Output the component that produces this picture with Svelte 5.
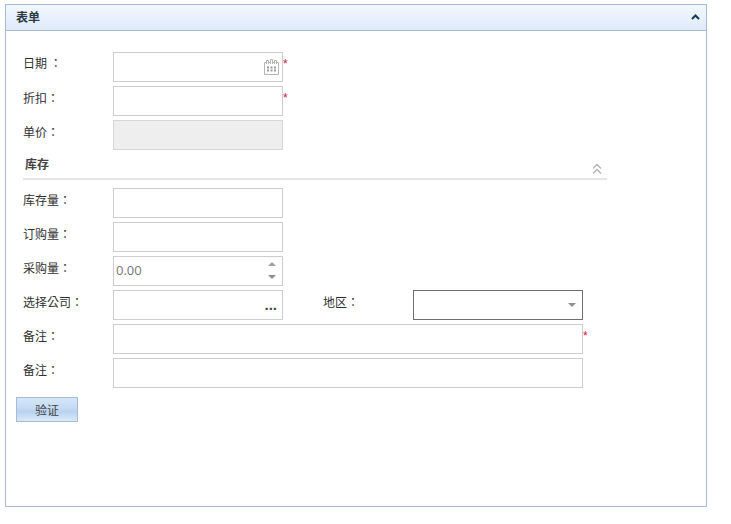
<script>
  const stock = ['库存量：', '订购量：'];
</script>

<div class="panel">
  <div class="panel-head">
    <span class="panel-title">表单</span>
    <svg class="collapse" width="9" height="6" viewBox="0 0 9 6"><path d="M1 5 L4.5 1.5 L8 5" fill="none" stroke="#1c3a4f" stroke-width="2"/></svg>
  </div>

  <div class="panel-body">
    <div class="row first">
      <span class="label">日期 ：</span>
      <div class="box">
        <svg class="calendar" width="17" height="17" viewBox="0 0 17 17" fill="none" stroke="#b4b4b4">
          <path d="M1.5 4.5 H3 M6 4.5 H7 M10 4.5 H11 M14 4.5 H15.5 V16.5 H1.5 V4.5"/>
          <path d="M3.5 6 V2.5 H5.5 V6 M7.5 6 V1.5 H9.5 V6 M11.5 6 V2.5 H13.5 V6"/>
          <path d="M4 9.5 H6 M7.5 9.5 H9.5 M11 9.5 H13 M4 12.5 H6 M7.5 12.5 H9.5 M11 12.5 H13" stroke="#9a9a9a" stroke-width="2"/>
        </svg>
      </div>
      <span class="req">*</span>
    </div>
    <div class="row">
      <span class="label">折扣：</span>
      <div class="box"></div>
      <span class="req">*</span>
    </div>
    <div class="row">
      <span class="label">单价：</span>
      <div class="box disabled"></div>
    </div>

    <div class="section">
      <span class="section-title">库存</span>
      <svg class="section-arrow" width="10" height="12" viewBox="0 0 10 12" fill="none" stroke="#b0b0b0" stroke-width="1.3">
        <path d="M1 5.5 L5 1.5 L9 5.5 M1 10.5 L5 6.5 L9 10.5"/>
      </svg>
    </div>

    {#each stock as name}
      <div class="row">
        <span class="label">{name}</span>
        <div class="box"></div>
      </div>
    {/each}

    <div class="row">
      <span class="label">采购量：</span>
      <div class="box">
        <span class="value">0.00</span>
        <span class="spin">
          <span class="tri up"></span>
          <span class="tri down"></span>
        </span>
      </div>
    </div>

    <div class="row">
      <span class="label">选择公司：</span>
      <div class="box"><span class="dots">...</span></div>
      <span class="label second">地区：</span>
      <div class="box select"><span class="tri down"></span></div>
    </div>

    <div class="row">
      <span class="label">备注：</span>
      <div class="box wide"></div>
      <span class="req">*</span>
    </div>
    <div class="row">
      <span class="label">备注：</span>
      <div class="box wide"></div>
    </div>

    <button class="verify">验证</button>
  </div>
</div>

<style>
  :global(body) {
    background: #fff;
    font-family: "Liberation Sans", "Noto Sans CJK SC", sans-serif;
    font-size: 12px;
    color: #333;
  }

  .panel {
    box-sizing: border-box;
    width: 702px;
    height: 503px;
    margin: 4px 0 0 5px;
    border: 1px solid #a3bdd8;
  }

  .panel-head {
    box-sizing: border-box;
    height: 26px;
    display: flex;
    justify-content: space-between;
    align-items: center;
    padding: 0 6px 2px 10px;
    background: linear-gradient(#f2f7fd, #dfeafa);
    border-bottom: 1px solid #a3bdd8;
  }

  .panel-title {
    font-weight: bold;
    color: #2b3a4a;
  }

  .panel-body {
    padding: 21px 0 0 17px;
  }

  .row {
    display: flex;
    height: 30px;
    margin-bottom: 4px;
  }

  .label {
    width: 90px;
    padding-top: 3px;
    line-height: 17px;
    color: #2f2f2f;
    font-family: "Noto Sans CJK TC", sans-serif;
  }

  .row.first .label {
    padding-top: 2px;
  }

  .label.second {
    margin-left: 40px;
  }

  .box {
    box-sizing: border-box;
    position: relative;
    width: 170px;
    height: 30px;
    display: flex;
    align-items: center;
    border: 1px solid #cdcdcd;
    background: #fff;
  }

  .box.wide {
    width: 470px;
  }

  .box.disabled {
    background: #eeeeee;
    border-color: #d6d6d6;
  }

  .box.select {
    border-color: #6f6f6f;
    justify-content: flex-end;
    padding-right: 6px;
  }

  .calendar {
    position: absolute;
    right: 2px;
    top: 5px;
  }

  .req {
    color: #d9143c;
    font-size: 12px;
    line-height: 14px;
    margin-top: 5px;
  }

  .value {
    padding: 0 0 2px 2px;
    color: #777;
    font-size: 13px;
    font-family: "Open Sans", "Liberation Sans", sans-serif;
  }

  .spin {
    position: absolute;
    right: 6px;
    top: 5px;
    display: flex;
    flex-direction: column;
    gap: 9px;
  }

  .tri {
    display: block;
    width: 0;
    height: 0;
    border-left: 4px solid transparent;
    border-right: 4px solid transparent;
  }

  .tri.up {
    border-bottom: 4px solid #a0a0a0;
  }

  .tri.down {
    border-top: 4px solid #8f8f8f;
  }

  .dots {
    position: absolute;
    right: 5px;
    bottom: 8px;
    font-size: 15px;
    font-weight: bold;
    line-height: 12px;
    color: #444;
  }

  .section {
    box-sizing: border-box;
    position: relative;
    width: 584px;
    height: 30px;
    margin-top: -4px;
    margin-bottom: 8px;
    padding: 5px 0 0 2px;
    border-bottom: 2px solid #e6e6e6;
  }

  .section-title {
    font-weight: bold;
    line-height: 20px;
    color: #444;
  }

  .section-arrow {
    position: absolute;
    right: 5px;
    top: 13px;
  }

  .verify {
    display: block;
    box-sizing: border-box;
    width: 62px;
    height: 25px;
    margin: 9px 0 0 -7px;
    border: 1px solid #a3bdd8;
    padding: 0;
    font: inherit;
    color: #444;
    background: linear-gradient(#d5e6fa 0%, #c4daf4 45%, #b8d2f0 58%, #d9e9fb 100%);
  }
</style>
